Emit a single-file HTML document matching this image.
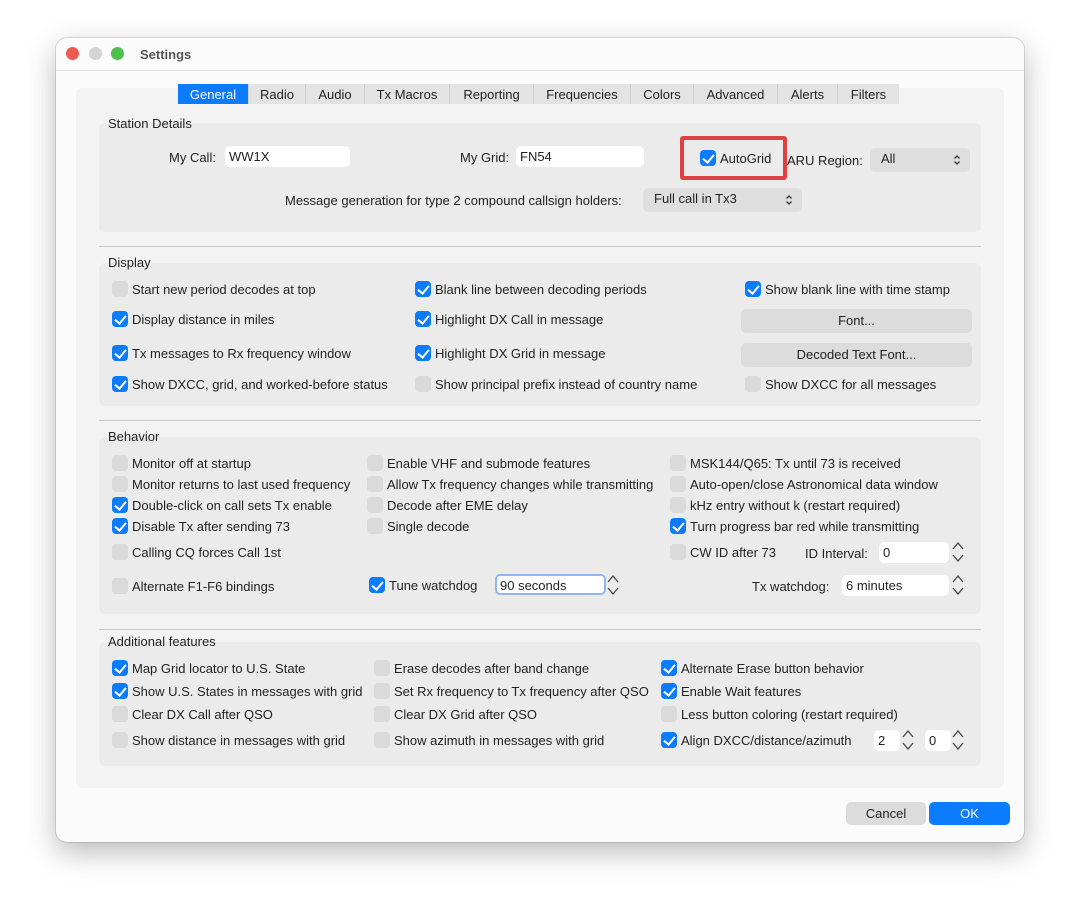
<!DOCTYPE html>
<html><head><meta charset="utf-8"><style>
*{box-sizing:border-box;margin:0;padding:0}
body{width:1080px;height:916px;background:#fff;font-family:"Liberation Sans",sans-serif;font-size:13px;color:#222;position:relative;overflow:hidden}
.win{position:absolute;left:56px;top:38px;width:968px;height:804px;background:#fbfbfb;border-radius:11px;box-shadow:0 10px 30px rgba(0,0,0,.28),0 0 0 1px rgba(0,0,0,.12)}
.a{position:absolute;white-space:nowrap}
.panel{position:absolute;left:76px;top:88px;width:928px;height:700px;background:#f3f3f3;border-radius:6px}
.tabs{position:absolute;top:84px;left:178px;height:20px;display:flex;background:#e3e3e3}
.tabs div{height:20px;line-height:21px;text-align:center;border-right:1px solid #d0d0d0;color:#222}
.tabs .on{background:#0b7bff;color:#fff}
.grp{position:absolute;left:99px;width:882px;background:#ebebeb;border-radius:6px}
.hr{position:absolute;left:99px;width:882px;height:1px;background:#c9c9c9}
.cb{position:absolute;height:17px;line-height:18px;padding-left:20px;white-space:nowrap}
.cb:before{content:"";position:absolute;left:0;top:0;width:16px;height:16px;border-radius:4px;background:#dadada}
.cb.k:before{background:#0b7bff}
.cb.k:after{content:"";position:absolute;left:5px;top:2px;width:5px;height:9px;border:solid #fff;border-width:0 2px 2px 0;transform:rotate(40deg)}
.in{position:absolute;background:#fff;border-radius:5px;height:21px;line-height:22px;padding-left:4px}
.sel{position:absolute;background:#dedede;border-radius:5px;height:24px;line-height:22px;padding-left:11px}
.sel svg{position:absolute;right:9px;top:6px}
.btn{position:absolute;background:#dcdcdc;border-radius:5px;height:24px;line-height:24px;text-align:center}
.sp{position:absolute;width:14px;height:24px}
</style></head><body>
<svg width="0" height="0" style="position:absolute"><defs>
<symbol id="spn" viewBox="0 0 14 24"><path d="M2 9 L7 3 L12 9 M2 15 L7 21 L12 15" fill="none" stroke="#444" stroke-width="1.3"/></symbol>
<symbol id="upd" viewBox="0 0 8 12"><path d="M1.5 4.5 L4 2 L6.5 4.5 M1.5 7.5 L4 10 L6.5 7.5" fill="none" stroke="#333" stroke-width="1.3"/></symbol>
</defs></svg>
<div class="win"></div>
<div class="a" style="left:66px;top:47px;width:13px;height:13px;border-radius:50%;background:#ee5a52"></div>
<div class="a" style="left:89px;top:47px;width:13px;height:13px;border-radius:50%;background:#d4d4d4"></div>
<div class="a" style="left:111px;top:47px;width:13px;height:13px;border-radius:50%;background:#4fbf4b"></div>
<div class="a" style="left:140px;top:47px;font-weight:bold;color:#555">Settings</div>
<div class="a" style="left:56px;top:70px;width:968px;height:1px;background:#e2e2e2"></div>
<div class="panel"></div>
<div class="tabs">
<div class="on" style="width:71px">General</div><div style="width:57px">Radio</div><div style="width:59px">Audio</div><div style="width:85px">Tx Macros</div><div style="width:84px">Reporting</div><div style="width:97px">Frequencies</div><div style="width:63px">Colors</div><div style="width:84px">Advanced</div><div style="width:60px">Alerts</div><div style="width:61px;border:0">Filters</div>
</div>

<div class="grp" style="top:123px;height:109px"></div>
<div class="a" style="left:108px;top:116px">Station Details</div>
<div class="a" style="left:169px;top:150px">My Call:</div>
<div class="in" style="left:225px;top:146px;width:125px">WW1X</div>
<div class="a" style="left:460px;top:150px">My Grid:</div>
<div class="in" style="left:516px;top:146px;width:128px">FN54</div>
<div class="a" style="left:680px;top:136px;width:107px;height:44px;border:4px solid #e0403f;border-radius:3px"></div>
<div class="cb k" style="left:700px;top:150px">AutoGrid</div>
<div class="a" style="left:787px;top:153px">ARU Region:</div>
<div class="sel" style="left:870px;top:148px;width:100px">All<svg width="8" height="12"><use href="#upd"/></svg></div>
<div class="a" style="left:285px;top:193px">Message generation for type 2 compound callsign holders:</div>
<div class="sel" style="left:643px;top:188px;width:159px">Full call in Tx3<svg width="8" height="12"><use href="#upd"/></svg></div>

<div class="hr" style="top:246px"></div>
<div class="grp" style="top:263px;height:143px"></div>
<div class="a" style="left:108px;top:255px">Display</div>
<div class="cb" style="left:112px;top:281px">Start new period decodes at top</div>
<div class="cb k" style="left:415px;top:281px">Blank line between decoding periods</div>
<div class="cb k" style="left:745px;top:281px">Show blank line with time stamp</div>
<div class="cb k" style="left:112px;top:311px">Display distance in miles</div>
<div class="cb k" style="left:415px;top:311px">Highlight DX Call in message</div>
<div class="btn" style="left:741px;top:309px;width:231px">Font...</div>
<div class="cb k" style="left:112px;top:345px">Tx messages to Rx frequency window</div>
<div class="cb k" style="left:415px;top:345px">Highlight DX Grid in message</div>
<div class="btn" style="left:741px;top:343px;width:231px">Decoded Text Font...</div>
<div class="cb k" style="left:112px;top:376px">Show DXCC, grid, and worked-before status</div>
<div class="cb" style="left:415px;top:376px">Show principal prefix instead of country name</div>
<div class="cb" style="left:745px;top:376px">Show DXCC for all messages</div>

<div class="hr" style="top:420px"></div>
<div class="grp" style="top:437px;height:177px"></div>
<div class="a" style="left:108px;top:429px">Behavior</div>
<div class="cb" style="left:112px;top:455px">Monitor off at startup</div>
<div class="cb" style="left:367px;top:455px">Enable VHF and submode features</div>
<div class="cb" style="left:670px;top:455px">MSK144/Q65: Tx until 73 is received</div>
<div class="cb" style="left:112px;top:476px">Monitor returns to last used frequency</div>
<div class="cb" style="left:367px;top:476px">Allow Tx frequency changes while transmitting</div>
<div class="cb" style="left:670px;top:476px">Auto-open/close Astronomical data window</div>
<div class="cb k" style="left:112px;top:497px">Double-click on call sets Tx enable</div>
<div class="cb" style="left:367px;top:497px">Decode after EME delay</div>
<div class="cb" style="left:670px;top:497px">kHz entry without k (restart required)</div>
<div class="cb k" style="left:112px;top:518px">Disable Tx after sending 73</div>
<div class="cb" style="left:367px;top:518px">Single decode</div>
<div class="cb k" style="left:670px;top:518px">Turn progress bar red while transmitting</div>
<div class="cb" style="left:112px;top:544px">Calling CQ forces Call 1st</div>
<div class="cb" style="left:670px;top:544px">CW ID after 73</div>
<div class="a" style="left:805px;top:546px">ID Interval:</div>
<div class="in" style="left:879px;top:542px;width:70px">0</div>
<svg class="sp" style="left:951px;top:540px"><use href="#spn"/></svg>
<div class="cb" style="left:112px;top:578px">Alternate F1-F6 bindings</div>
<div class="cb k" style="left:369px;top:577px">Tune watchdog</div>
<div class="in" style="left:495px;top:574px;width:111px;border:2px solid #8fb6f0;line-height:19px;padding-left:3px">90 seconds</div>
<svg class="sp" style="left:606px;top:573px"><use href="#spn"/></svg>
<div class="a" style="left:752px;top:579px">Tx watchdog:</div>
<div class="in" style="left:842px;top:575px;width:107px">6 minutes</div>
<svg class="sp" style="left:951px;top:573px"><use href="#spn"/></svg>

<div class="hr" style="top:629px"></div>
<div class="grp" style="top:642px;height:124px"></div>
<div class="a" style="left:108px;top:634px">Additional features</div>
<div class="cb k" style="left:112px;top:660px">Map Grid locator to U.S. State</div>
<div class="cb" style="left:374px;top:660px">Erase decodes after band change</div>
<div class="cb k" style="left:661px;top:660px">Alternate Erase button behavior</div>
<div class="cb k" style="left:112px;top:683px">Show U.S. States in messages with grid</div>
<div class="cb" style="left:374px;top:683px">Set Rx frequency to Tx frequency after QSO</div>
<div class="cb k" style="left:661px;top:683px">Enable Wait features</div>
<div class="cb" style="left:112px;top:706px">Clear DX Call after QSO</div>
<div class="cb" style="left:374px;top:706px">Clear DX Grid after QSO</div>
<div class="cb" style="left:661px;top:706px">Less button coloring (restart required)</div>
<div class="cb" style="left:112px;top:732px">Show distance in messages with grid</div>
<div class="cb" style="left:374px;top:732px">Show azimuth in messages with grid</div>
<div class="cb k" style="left:661px;top:732px">Align DXCC/distance/azimuth</div>
<div class="in" style="left:874px;top:730px;width:26px">2</div>
<svg class="sp" style="left:901px;top:728px"><use href="#spn"/></svg>
<div class="in" style="left:925px;top:730px;width:26px">0</div>
<svg class="sp" style="left:951px;top:728px"><use href="#spn"/></svg>

<div class="btn" style="left:846px;top:802px;width:80px;height:23px;line-height:23px">Cancel</div>
<div class="btn" style="left:929px;top:802px;width:81px;height:23px;line-height:23px;background:#0b7bff;color:#fff">OK</div>
</body></html>
